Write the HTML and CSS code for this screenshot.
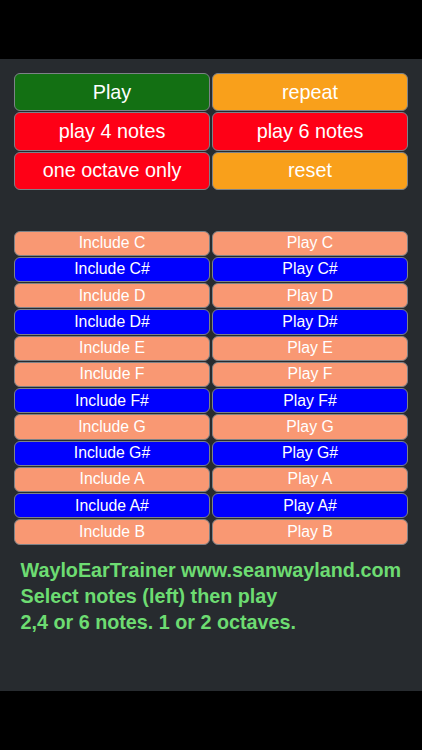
FILE: index.html
```html
<!DOCTYPE html>
<html>
<head>
<meta charset="utf-8">
<link rel="stylesheet" href="styles.css">
</head>
<body>
<div class="top-bar"></div>
<main class="panel">
  <section class="controls">
    <div class="btn big green">Play</div>
    <div class="btn big orange">repeat</div>
    <div class="btn big red">play 4 notes</div>
    <div class="btn big red">play 6 notes</div>
    <div class="btn big red">one octave only</div>
    <div class="btn big orange">reset</div>
  </section>
  <section class="notes">
    <div class="btn note salmon">Include C</div><div class="btn note salmon">Play C</div>
    <div class="btn note blue">Include C#</div><div class="btn note blue">Play C#</div>
    <div class="btn note salmon">Include D</div><div class="btn note salmon">Play D</div>
    <div class="btn note blue">Include D#</div><div class="btn note blue">Play D#</div>
    <div class="btn note salmon">Include E</div><div class="btn note salmon">Play E</div>
    <div class="btn note salmon">Include F</div><div class="btn note salmon">Play F</div>
    <div class="btn note blue">Include F#</div><div class="btn note blue">Play F#</div>
    <div class="btn note salmon">Include G</div><div class="btn note salmon">Play G</div>
    <div class="btn note blue">Include G#</div><div class="btn note blue">Play G#</div>
    <div class="btn note salmon">Include A</div><div class="btn note salmon">Play A</div>
    <div class="btn note blue">Include A#</div><div class="btn note blue">Play A#</div>
    <div class="btn note salmon">Include B</div><div class="btn note salmon">Play B</div>
  </section>
  <p class="info">WayloEarTrainer www.seanwayland.com<br>Select notes (left) then play<br>2,4 or 6 notes. 1 or 2 octaves.</p>
</main>
<div class="bottom-bar"></div>
</body>
</html>
```

FILE: styles.css
```css
html, body {
  margin: 0;
  padding: 0;
  background: #000;
  width: 422px;
  height: 750px;
  overflow: hidden;
  font-family: "Liberation Sans", Arial, sans-serif;
}
.top-bar {
  height: 59px;
  background: #000;
}
.panel {
  height: 632px;
  background: #272b2f;
  padding: 14px 14px 0 14px;
  box-sizing: border-box;
}
.controls {
  display: grid;
  grid-template-columns: 196px 196px;
  column-gap: 2px;
  row-gap: 1px;
}
.notes {
  display: grid;
  grid-template-columns: 196px 196px;
  column-gap: 2px;
  row-gap: 1px;
  margin-top: 40.7px;
}
.btn {
  box-sizing: border-box;
  border: 1px solid #7d8288;
  border-radius: 6px;
  color: #fff;
  display: flex;
  align-items: center;
  justify-content: center;
  white-space: nowrap;
}
.big {
  height: 38.3px;
  font-size: 19.8px;
}
.note {
  height: 25.25px;
  font-size: 15.8px;
}
.green { background: #137013; }
.orange { background: #f9a01b; }
.red { background: #fe0016; }
.salmon { background: #f99873; }
.blue { background: #0000fe; }
.info {
  margin: 12.5px 0 0 6.5px;
  color: #6ddc72;
  font-weight: bold;
  font-size: 19.75px;
  line-height: 26px;
  white-space: nowrap;
}
.bottom-bar {
  height: 59px;
  background: #000;
}
```
